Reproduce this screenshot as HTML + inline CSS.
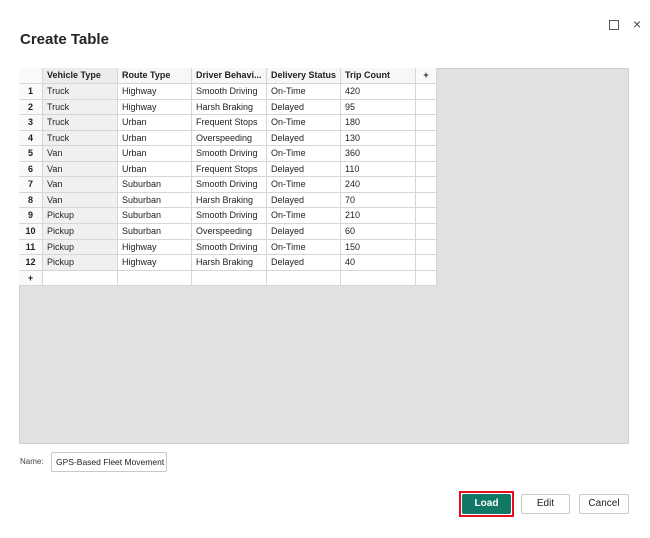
<!DOCTYPE html>
<html><head><style>
body{margin:0;width:650px;height:538px;background:#fff;font-family:"Segoe UI","Liberation Sans",sans-serif;position:relative;overflow:hidden;color:#222}
.t{position:absolute;left:20px;top:31px;font-size:15px;font-weight:600;color:#252423}
.grid{position:absolute;left:19px;top:68px;width:610px;height:376px;background:#e1e1e1;border:1px solid #d0d0d0;box-sizing:border-box}
.c{position:absolute;box-sizing:border-box;border-right:1px solid #d6d6d6;border-bottom:1px solid #d6d6d6;font-size:9px;padding-left:4px;line-height:15px;white-space:nowrap;overflow:hidden;background:#fff}
.h{font-weight:700;background:#f7f7f7}
.n{font-weight:700;background:#fafafa;text-align:center;padding:0}
.btn{position:absolute;box-sizing:border-box;border:1px solid #c8c8c8;border-radius:2px;background:#fff;font-size:10px;text-align:center;line-height:18px}
</style></head><body>
<div class="t">Create Table</div>
<div style="position:absolute;left:609px;top:20px;width:8px;height:8px;border:1px solid #555"></div>
<div style="position:absolute;left:633px;top:16px;font-size:14px;color:#444">×</div>
<div class="grid"></div>
<div id="tb"></div>
<div style="position:absolute;left:20px;top:457px;font-size:8px;color:#444">Name:</div>
<div style="position:absolute;left:51px;top:452px;width:116px;height:20px;box-sizing:border-box;border:1px solid #c8c8c8;border-radius:2px;font-size:8.5px;line-height:18px;padding-left:4px;white-space:nowrap;overflow:hidden">GPS-Based Fleet Movement</div>
<div style="position:absolute;left:459px;top:491px;width:55px;height:26px;border:2px solid #e01020;box-sizing:border-box"></div>
<div class="btn" style="left:462px;top:494px;width:49px;height:20px;background:#117865;border-color:#117865;color:#fff;font-weight:600">Load</div>
<div class="btn" style="left:521px;top:494px;width:49px;height:20px">Edit</div>
<div class="btn" style="left:579px;top:494px;width:50px;height:20px">Cancel</div>
<script>
var cols=[19,43,118,192,267,341,416,437];
var head=["","Vehicle Type","Route Type","Driver Behavi...","Delivery Status","Trip Count","+"];
var d=[["Truck","Highway","Smooth Driving","On-Time","420"],["Truck","Highway","Harsh Braking","Delayed","95"],["Truck","Urban","Frequent Stops","On-Time","180"],["Truck","Urban","Overspeeding","Delayed","130"],["Van","Urban","Smooth Driving","On-Time","360"],["Van","Urban","Frequent Stops","Delayed","110"],["Van","Suburban","Smooth Driving","On-Time","240"],["Van","Suburban","Harsh Braking","Delayed","70"],["Pickup","Suburban","Smooth Driving","On-Time","210"],["Pickup","Suburban","Overspeeding","Delayed","60"],["Pickup","Highway","Smooth Driving","On-Time","150"],["Pickup","Highway","Harsh Braking","Delayed","40"]];
var h="";
function cell(x,y,w,hh,txt,cls,bg){h+='<div class="c '+cls+'" style="left:'+x+'px;top:'+y+'px;width:'+w+'px;height:'+hh+'px;'+(bg?'background:'+bg:'')+'">'+txt+'</div>';}
for(var r=0;r<14;r++){
 var y=r==0?68:Math.round(84+(r-1)*15.55);var y2=r==0?84:Math.round(84+r*15.55);
 for(var c=0;c<7;c++){
  var x=cols[c],w=cols[c+1]-x,t="",cls="",bg="";
  if(r==0){t=head[c];cls="h";if(c==6)cls="n";if(c==1)bg="#ececec";}
  else if(r<=12){if(c==0){t=r;cls="n";}else if(c<6)t=d[r-1][c-1];if(c==1)bg="#f0f0f0";}
  else{if(c==0){t="+";cls="n";}}
  if(r==0&&c==0)cls="n";
  cell(x,y,w,y2-y,t,cls,bg);
 }
}
document.getElementById("tb").innerHTML=h;
</script>
</body></html>
